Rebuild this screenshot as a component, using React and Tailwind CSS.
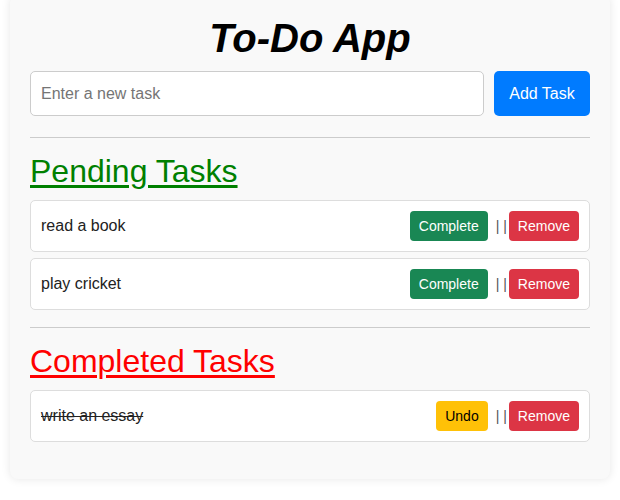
import React, {useState} from "react";

const btn = "h-[30px] px-[9px] rounded-[4px] text-[14px] leading-none flex items-center";

function TaskItem({task, done, onToggle, onRemove}) {
    return (
        <li className="flex items-center justify-between h-[52px] mb-[6px] px-[10px] bg-white border border-[#ddd] rounded-[5px]">
            <span className={`text-[16px] text-[#222] ${done ? "line-through" : ""}`}>{task}</span>
            <div className="flex items-center">
                {done ? (
                    <button onClick={onToggle} className={`${btn} bg-[#ffc107] text-black`}>Undo</button>
                ) : (
                    <button onClick={onToggle} className={`${btn} bg-[#198754] text-white`}>Complete</button>
                )}
                <span className="ml-[8px] mr-[2px] text-[14px] text-[#555] whitespace-pre">| |</span>
                <button onClick={onRemove} className={`${btn} bg-[#dc3545] text-white`}>Remove</button>
            </div>
        </li>
    );
}

export default function App() {
    const [text, setText] = useState("");
    const [pending, setPending] = useState(["read a book", "play cricket"]);
    const [completed, setCompleted] = useState(["write an essay"]);

    const addTask = () => {
        if (!text.trim()) return;
        setPending([...pending, text.trim()]);
        setText("");
    };

    return (
        <div className="w-[620px] h-[500px] bg-white overflow-hidden font-['Liberation_Sans',Arial,sans-serif]">
            <div className="mx-auto w-[600px] -mt-[5px] pt-5 px-5 pb-5 bg-[#f9f9f9] rounded-lg shadow-[0_0_10px_rgba(0,0,0,0.1)]">
                <h1 className="text-center text-[40px] leading-[46px] font-bold italic text-black">To-Do App</h1>

                <div className="flex mt-[10px] gap-[10px]">
                    <input
                        value={text}
                        onChange={(e) => setText(e.target.value)}
                        placeholder="Enter a new task"
                        className="flex-1 h-[45px] px-[10px] text-[16px] bg-white border border-[#ccc] rounded-[5px] outline-none placeholder:text-[#757575]"
                    />
                    <button onClick={addTask} className="h-[45px] w-[96px] rounded-[5px] bg-[#007bff] text-white text-[16px]">
                        Add Task
                    </button>
                </div>

                <hr className="mt-[21px] border-0 h-px bg-[#ccc]"/>

                <h2 className="mt-[15px] mb-[10px] text-[32px] leading-[37px] text-[#008000] underline underline-offset-[3px]">Pending Tasks</h2>
                <ul>
                    {pending.map((t, i) => (
                        <TaskItem
                            key={t + i}
                            task={t}
                            onToggle={() => {
                                setPending(pending.filter((_, j) => j !== i));
                                setCompleted([...completed, t]);
                            }}
                            onRemove={() => setPending(pending.filter((_, j) => j !== i))}
                        />
                    ))}
                </ul>

                <hr className="mt-[17px] border-0 h-px bg-[#ccc]"/>

                <h2 className="mt-[15px] mb-[10px] text-[32px] leading-[37px] text-[#ff0000] underline underline-offset-[3px]">Completed Tasks</h2>
                <ul>
                    {completed.map((t, i) => (
                        <TaskItem
                            key={t + i}
                            task={t}
                            done
                            onToggle={() => {
                                setCompleted(completed.filter((_, j) => j !== i));
                                setPending([...pending, t]);
                            }}
                            onRemove={() => setCompleted(completed.filter((_, j) => j !== i))}
                        />
                    ))}
                </ul>
                <div className="h-[11px]"/>
            </div>
        </div>
    );
}
